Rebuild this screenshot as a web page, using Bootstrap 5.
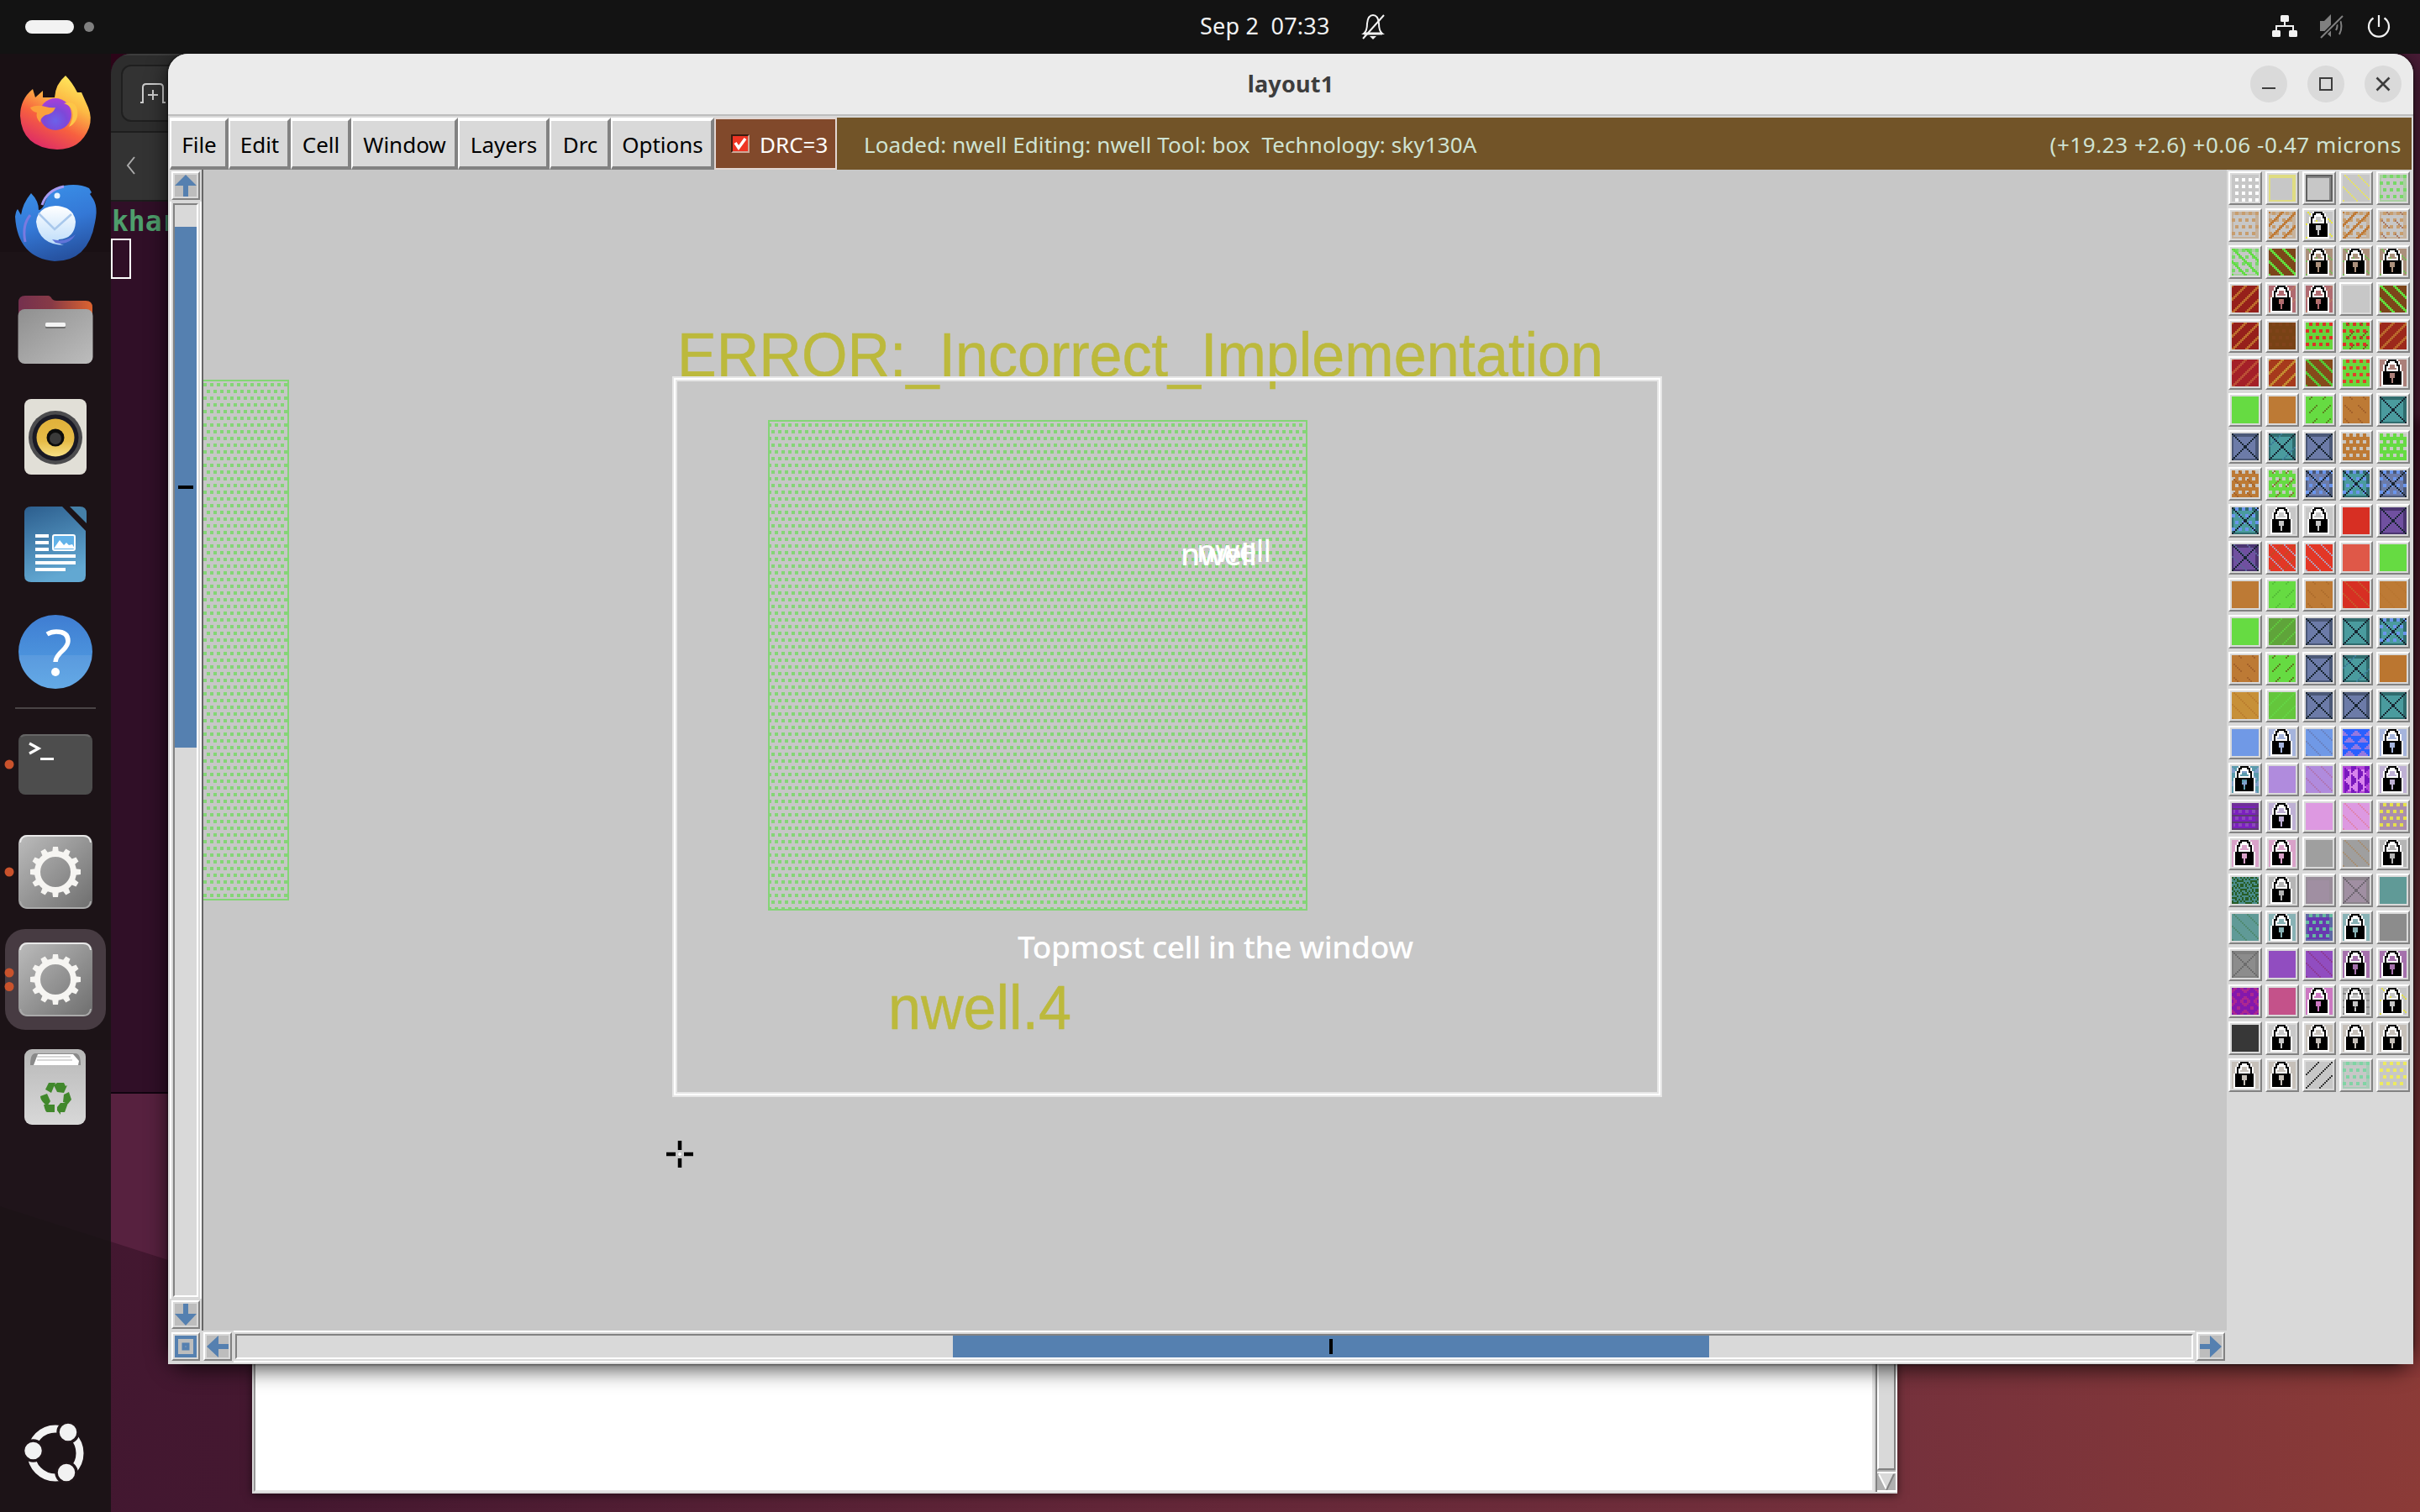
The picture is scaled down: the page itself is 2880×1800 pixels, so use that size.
<!DOCTYPE html>
<html lang="en">
<head>
<meta charset="utf-8">
<title>layout1</title>
<link rel="stylesheet" href="https://cdn.jsdelivr.net/npm/bootstrap@5.3.0/dist/css/bootstrap.min.css">
<style>
body{margin:0;overflow:hidden;background:#451830}
svg{display:block}
.desk{width:2880px;height:1800px;font-family:"Noto Sans","Open Sans",sans-serif;font-size:26px;line-height:1}
.wall{left:0;top:0}
.topbar{height:64px;background:#131313;color:#f2f2f2;z-index:5}
.pill{width:58px;height:16px;border-radius:8px;background:#f2f2f2;margin-left:30px}
.pilldot{width:12px;height:12px;border-radius:6px;background:#808080;margin-left:12px}
.clock{left:1428px;top:-1px;height:64px;gap:37px}
.clock span{font-size:27px;white-space:pre;letter-spacing:.2px;margin-top:-2px}
.tray{padding-right:33px;height:62px}
.tray svg+svg{margin-left:24px}
.dock{left:0;top:64px;width:132px;height:1736px;background:rgba(22,19,20,.86);padding-top:8px}
.dock svg{flex:none}
.dock-sep{width:96px;height:2px;margin:2px 18px;background:#4a4446}
.win{position:absolute;overflow:hidden}
.term{left:132px;top:64px;width:700px;height:1238px;background:#300f27;border-radius:24px 24px 0 0;border-bottom:2px solid #120410}
.term-head{height:94px;background:#2d2d2d;border-bottom:2px solid #1e1e1e;border-top:2px solid #3d3d3d;padding:11px 12px}
.term-new{width:120px;height:68px;border:2px solid #1f1f1f;border-radius:12px;background:#333;padding:20px 20px}
.term-tabs{height:82px;background:#333;border-bottom:2px solid #1c1c1c;padding:28px 18px}
.term-text{font:bold 33px/44px "DejaVu Sans Mono",monospace;color:#4e9e6c;padding:2px 0 0 1px}
.term-cur{width:24px;height:48px;border:2px solid #fff;margin-top:-2px}
.back{left:300px;top:1400px;width:1958px;height:378px;background:#fff;border-left:2px solid #d9d9d9;border-bottom:2px solid #d9d9d9;box-shadow:0 2px 10px rgba(0,0,0,.55)}
.back-text{border-left:2px solid #999;border-bottom:2px solid #e5e5e5;border-right:2px solid #e5e5e5}
.back-scroll{width:28px;background:#d9d9d9;padding-left:2px;border-right:2px solid #fff}
.back-track{border-left:2px solid #828282;background:#b0b0b0}
.back-thumb{border:2px solid #828282;border-left-color:#fff;background:#d9d9d9;margin-bottom:2px}
.main{left:200px;top:64px;width:2672px;height:1560px;background:#d9d9d9;border-radius:24px 24px 0 0}
.main-shadow{position:absolute;left:200px;top:64px;width:2672px;height:1560px;border-radius:24px;box-shadow:0 6px 26px rgba(0,0,0,.7),0 0 3px #000}
.title{height:74px;background:#ebebeb;border-bottom:2px solid #bdbdbd;color:#3d3d3d}
.title-text{font-weight:700;font-size:27px;padding-bottom:2px;letter-spacing:.2px}
.wbtns{right:14px;top:14px;gap:24px}
.menus{height:62px;margin:2px 2px 0}
.mbtn{background:#d9d9d9;border:solid;border-width:4px 4px 4px 2px;border-color:#fff #828282 #828282 #fff;color:#000;height:62px;flex:none;padding:2px 0 0 2px}
.drc{width:146px;border:2px solid #e2d6d2;background:#81492b;color:#fff;padding-left:18px;flex:none}
.drc span{padding-top:2px}
.drc-box{width:22px;height:22px;background:#ee3524;border:2px solid;border-color:#3a1c10 #cda898 #cda898 #3a1c10;margin-right:12px}
.status{background:#725428;color:#cfe3d3;padding:2px 12px 0 32px;white-space:pre}
.st-msg{letter-spacing:.11px}
.st-pos{letter-spacing:.56px}
.left{width:2448px;margin-left:2px;flex:none}
.vbar{width:38px;padding:2px 0;gap:2px}
.abtn{width:34px;height:34px;flex:none;border:2px solid;border-color:#fff #828282 #828282 #fff;padding:2px;background:#d9d9d9}
.abtn svg{background:#bdbdbd}
.vtrough{border:solid #fff;border-width:0 2px;padding:2px}
.vtrough>div{border:2px solid;border-color:#828282 #fff #fff #828282}
.vthumb{height:620px;margin-top:26px;background:#5580b0}
.hbar{height:40px;padding:0 2px 2px;gap:2px}
.htrough{border:solid #fff;border-width:2px 0;padding:2px}
.htrough>div{border:2px solid;border-color:#828282 #fff #fff #828282}
.hthumb{width:900px;margin-left:852px;background:#5580b0}
.view{background:#c7c7c7;border-left:2px solid #666}
.palette{display:grid;grid-template-columns:repeat(5,40px);grid-auto-rows:40px;gap:4px;padding:2px;align-content:start}
.sw{border:2px solid;border-color:#fff #828282 #828282 #fff;padding:2px}
</style>
<script src="https://cdn.jsdelivr.net/npm/bootstrap@5.3.0/dist/js/bootstrap.bundle.min.js"></script>
</head>
<body>
<div class="desk position-relative overflow-hidden">
<svg class="wall position-absolute" width="2880" height="1800">
<defs>
<linearGradient id="wg" x1="0" y1="1700" x2="2880" y2="1500" gradientUnits="userSpaceOnUse"><stop offset="0" stop-color="#411730"/><stop offset=".12" stop-color="#451830"/><stop offset=".45" stop-color="#622638"/><stop offset=".78" stop-color="#75313c"/><stop offset="1" stop-color="#8c3b37"/></linearGradient>
<linearGradient id="wr" x1="0" y1="0" x2="0" y2="1"><stop offset="0" stop-color="#4a1d38"/><stop offset=".3" stop-color="#47192f"/><stop offset=".31" stop-color="#380c20"/><stop offset=".6" stop-color="#50202a"/><stop offset="1" stop-color="#8a3837"/></linearGradient>
</defs>
<rect width="2880" height="1800" fill="url(#wg)"/>
<rect x="2800" width="80" height="1640" fill="url(#wr)"/>
<path d="M0 1250H200V1500L0 1436Z" fill="#57213f"/>
<rect width="300" height="300" fill="#2c0418"/>
</svg>

<div class="win term">
  <div class="term-head"><div class="term-new"><svg width="32" height="26" fill="none" stroke="#ccc" stroke-width="2"><path d="M1 23h3V5q0-4 4-4h16q4 0 4 4v18h3M16 8v12M10 14h12"/></svg></div></div>
  <div class="term-tabs"><svg width="12" height="22" fill="none" stroke="#aaa" stroke-width="2"><path d="M10 1L2 11l8 10"/></svg></div>
  <div class="term-text">khar</div><div class="term-cur"></div>
</div>

<div class="win back d-flex">
  <div class="back-text flex-grow-1"></div>
  <div class="back-scroll d-flex"><div class="back-track flex-grow-1 d-flex flex-column"><div class="back-thumb flex-grow-1"></div><svg width="22" height="24"><path d="M0 1h22" stroke="#fff" stroke-width="2"/><path d="M2 2h18l-9 19z" fill="#d9d9d9"/><path d="M2 3l9 18" stroke="#fff" stroke-width="2"/><path d="M20 3l-9 19" stroke="#828282" stroke-width="2"/><path d="M0 23h22" stroke="#fff" stroke-width="2"/></svg></div></div>
</div>

<div class="dock position-absolute d-flex flex-column">
<svg width="132" height="128" viewBox="0 0 132 128">
<defs>
<linearGradient id="ff" x1=".8" y1="0" x2=".3" y2="1"><stop offset="0" stop-color="#fff060"/><stop offset=".35" stop-color="#fcb944"/><stop offset=".65" stop-color="#f7603f"/><stop offset="1" stop-color="#dc2a68"/></linearGradient>
<radialGradient id="fp" cx=".5" cy=".7" r=".7"><stop offset="0" stop-color="#6b62ea"/><stop offset=".5" stop-color="#7d48d8"/><stop offset="1" stop-color="#a83fd8"/></radialGradient>
<linearGradient id="tb" x1=".3" y1="0" x2=".6" y2="1"><stop offset="0" stop-color="#3a90e8"/><stop offset=".5" stop-color="#3478d6"/><stop offset="1" stop-color="#254f9c"/></linearGradient>
<linearGradient id="en" x1="0" y1="0" x2="0" y2="1"><stop offset="0" stop-color="#fff"/><stop offset="1" stop-color="#bcdcfa"/></linearGradient>
<linearGradient id="fo"><stop offset="0" stop-color="#74304e"/><stop offset=".45" stop-color="#873a46"/><stop offset="1" stop-color="#dd6430"/></linearGradient>
<linearGradient id="fg" x1="0" y1="0" x2="1" y2="1"><stop offset="0" stop-color="#8f8f8f"/><stop offset="1" stop-color="#bdbdbd"/></linearGradient>
<linearGradient id="gg" x1="0" y1="0" x2="1" y2="1"><stop offset="0" stop-color="#bcbcbc"/><stop offset="1" stop-color="#6e6e6e"/></linearGradient>
<linearGradient id="wb" x1="0" y1="0" x2=".3" y2="1"><stop offset="0" stop-color="#2c5e8e"/><stop offset="1" stop-color="#62a8d2"/></linearGradient>
<linearGradient id="hb" x1="0" y1="0" x2="0" y2="1"><stop offset="0" stop-color="#3f7dd2"/><stop offset=".54" stop-color="#4b92dc"/><stop offset=".55" stop-color="#5a9ade"/><stop offset="1" stop-color="#64aae6"/></linearGradient>
<linearGradient id="yl" x1="0" y1="0" x2="0" y2="1"><stop offset="0" stop-color="#e0b13a"/><stop offset=".6" stop-color="#e6bc48"/><stop offset="1" stop-color="#f6e085"/></linearGradient>
<linearGradient id="tg" x1="0" y1="0" x2="0" y2="1"><stop offset="0" stop-color="#b8b8b8"/><stop offset="1" stop-color="#d8d8d8"/></linearGradient>
<g id="gear"><rect x="22" y="20" width="88" height="88" rx="10" fill="url(#gg)"/><path d="M24 29q1-8 9-8h66q8 0 9 8" stroke="#e8e8e8" stroke-width="2" fill="none"/><path d="M24 99q1 8 9 8h66q8 0 9-8" stroke="#aaa" stroke-width="2" fill="none"/><circle cx="66" cy="64" r="21.500" fill="none" stroke="#f6f5f2" stroke-width="7"/><g fill="#f6f5f2"><g id="t3"><path d="M62 42l1-8h6l1 8zM62 86l1 8h6l1-8z"/><path d="M62 42l1-8h6l1 8zM62 86l1 8h6l1-8z" transform="rotate(30 66 64)"/><path d="M62 42l1-8h6l1 8zM62 86l1 8h6l1-8z" transform="rotate(60 66 64)"/></g><use href="#t3" transform="rotate(90 66 64)"/></g></g>
</defs>
<path d="M24 66q0-20 15-32l3 10 9-8v8q8 0 14 0 1-16 13-26 8 8 14 20l5 0 8 18q5 12 1 24-10 26-38 26Q26 104 24 66z" fill="url(#ff)"/>
<circle cx="66" cy="64" r="19" fill="url(#fp)"/>
<path d="M36 56q8-4 18-1 7 2 12 1-3 8-12 9-6 3-6 9-6-6-4-12-6-1-8-6z" fill="#fba03c"/><path d="M76 51q18 6 6 28 12-6 10-20-2-12-16-8z" fill="#fdc648"/>
</svg>
<svg width="132" height="128" viewBox="0 0 132 128">
<path d="M18 58q1-7 3-9 3 5 4 7 2-14 12-26 9 9 9 20 3 0 6-5 6-20 24-24 18-3 30 3l3 5-2 2 4 6q6 10 2 28-8 46-48 46-44-4-47-53z" fill="url(#tb)"/>
<path d="M50 44q6-18 26-22" stroke="#a79af0" stroke-width="3" fill="none"/><path d="M30 88q-4-20 6-32" stroke="#7a7ae0" stroke-width="3" fill="none"/>
<path d="M43 64q2-18 23-19 22 1 24 19-1 20-20 21-3 4 6 7-30-1-33-28z" fill="url(#en)"/><path d="M46 54l19 19 20-18" stroke="#a9c8ec" stroke-width="2.500" fill="none"/><circle cx="68" cy="33" r="3.500" fill="#e8f4ff"/>
<path d="M62 85q16 4 28-6-8 14-24 10z" fill="#5f74d8"/>
</svg>
<svg width="132" height="128" viewBox="0 0 132 128"><path d="M22 50V32q0-8 8-8h27q3 0 5 4 2 2 5 2h35q8 0 8 8v20H22z" fill="url(#fo)"/><rect x="21.500" y="40" width="89" height="65" rx="8" fill="url(#fg)"/><rect x="54" y="58" width="24" height="5" rx="1.500" fill="#6f6f6f"/><rect x="54" y="56" width="24" height="5" rx="1.500" fill="#f4f4f4"/></svg>
<svg width="132" height="128" viewBox="0 0 132 128"><rect x="29" y="19" width="74" height="90" rx="8" fill="#e1dfd7"/><circle cx="66" cy="65" r="32" fill="#4c4c4e"/><circle cx="66" cy="65" r="27.500" fill="#1a1a24"/><circle cx="66" cy="65" r="22.500" fill="url(#yl)"/><circle cx="66" cy="65" r="10.500" fill="#0c0c0c"/><circle cx="66" cy="66" r="7" fill="#3a3a3a"/></svg>
<svg width="132" height="128" viewBox="0 0 132 128"><path d="M37 19h37l28 29v53q0 8-8 8H37q-8 0-8-8V27q0-8 8-8z" fill="url(#wb)"/><path d="M83 19h12q8 0 8 8v12z" fill="#4580a8"/><path d="M42 54h16M42 62h16M42 70h16M42 78h48M42 86h48M42 94h36" stroke="#fff" stroke-width="4"/><rect x="63" y="53" width="26" height="18" rx="2" fill="#62b2e8" stroke="#fff" stroke-width="2"/><path d="M64 69l7-10 5 6 3-3 3 3 4-1 3 5z" fill="#fff"/></svg>
<svg width="132" height="128" viewBox="0 0 132 128"><circle cx="66" cy="64" r="44" fill="url(#hb)"/><path d="M56 43q5-3 11-3 14 0 14 11 0 5-6 11-9 8-9 14" stroke="#fff" stroke-width="5.500" fill="none"/><circle cx="66" cy="88" r="5" fill="#fff"/></svg>
<div class="dock-sep flex-shrink-0"></div>
<svg width="132" height="128" viewBox="0 0 132 128"><circle cx="11" cy="64" r="5.500" fill="#c9522c"/><rect x="22" y="28" width="88" height="72" rx="8" fill="#4d4d4d"/><path d="M25 31q2-2 6-2h70q4 0 6 2" stroke="#666" stroke-width="2" fill="none"/><path d="M35 39l11 6-11 6" stroke="#fff" stroke-width="3.200" fill="none"/><path d="M48 57.500h16" stroke="#fff" stroke-width="3"/></svg>
<svg width="132" height="128" viewBox="0 0 132 128"><circle cx="11" cy="64" r="5.500" fill="#c9522c"/><use href="#gear"/></svg>
<svg width="132" height="128" viewBox="0 0 132 128"><rect x="6" y="4" width="120" height="120" rx="24" fill="#473b42"/><circle cx="11" cy="56" r="5.500" fill="#c9522c"/><circle cx="11" cy="72.500" r="5.500" fill="#c9522c"/><use href="#gear"/></svg>
<svg width="132" height="128" viewBox="0 0 132 128"><rect x="29" y="19" width="73" height="90" rx="9" fill="url(#tg)"/><path d="M36 38q0-14 6-14h48q6 0 6 14z" fill="#8a8a8a"/><path d="M40 38l5-13h42l7 8-1 5z" fill="#fff"/><path d="M44 32h42M44 28h40" stroke="#ccc" stroke-width="1.500"/><g fill="#41882c"><path d="M54 67l4-8h8l-5 12zM68 59h8l2 4 2-1-4 9-8-1-4-8zM48 75l8-3 4 9-4 6-4-4q-4-4-4-8zM52 85h13v9H56q-2 0-4-9zM76 73l6-3 3 9-4 5-6-2zM68 88l4-5h9l-4 11h-5v3l-4-5z"/></g></svg>
<svg class="mt-auto" width="132" height="142" viewBox="0 0 132 142"><circle cx="66" cy="72" r="29" fill="none" stroke="#f2f2f2" stroke-width="9"/><g fill="#f2f2f2" stroke="#1f1519" stroke-width="3.500"><circle cx="39.500" cy="69" r="12"/><circle cx="81" cy="47" r="12"/><circle cx="79" cy="95" r="12"/></g></svg>
</div>

<div class="main-shadow"></div>
<div class="win main d-flex flex-column">
  <div class="title position-relative d-flex align-items-center justify-content-center flex-shrink-0">
    <span class="title-text">layout1</span>
    <div class="wbtns position-absolute d-flex">
      <svg width="44" height="44"><circle cx="22" cy="22" r="22" fill="#dadada"/><path d="M14 27h16" stroke="#3d3d3d" stroke-width="2"/></svg>
      <svg width="44" height="44"><circle cx="22" cy="22" r="22" fill="#dadada"/><path d="M15 15h14v14H15z" stroke="#3d3d3d" stroke-width="2" fill="none"/></svg>
      <svg width="44" height="44"><circle cx="22" cy="22" r="22" fill="#dadada"/><path d="M14.500 14.500l15 15M29.500 14.500l-15 15" stroke="#3d3d3d" stroke-width="2.600"/></svg>
    </div>
  </div>
  <div class="menus d-flex flex-shrink-0" id="menus">
    <div class="mbtn d-flex align-items-center justify-content-center" style="width:70px">File</div>
    <div class="mbtn d-flex align-items-center justify-content-center" style="width:74px">Edit</div>
    <div class="mbtn d-flex align-items-center justify-content-center" style="width:72px">Cell</div>
    <div class="mbtn d-flex align-items-center justify-content-center" style="width:127px">Window</div>
    <div class="mbtn d-flex align-items-center justify-content-center" style="width:109px">Layers</div>
    <div class="mbtn d-flex align-items-center justify-content-center" style="width:73px">Drc</div>
    <div class="mbtn d-flex align-items-center justify-content-center" style="width:123px">Options</div>
    <div class="drc d-flex align-items-center"><div class="drc-box"><svg width="18" height="18"><path d="M3 8l4 6 8-11" stroke="#fff" stroke-width="3.500" fill="none"/></svg></div><span>DRC=3</span></div>
    <div class="status d-flex align-items-center justify-content-between flex-grow-1"><span class="st-msg">Loaded: nwell Editing: nwell Tool: box  Technology: sky130A</span><span class="st-pos">(+19.23 +2.6) +0.06 -0.47 microns</span></div>
  </div>
  <div class="d-flex flex-grow-1">
    <div class="left d-flex flex-column">
      <div class="d-flex flex-grow-1">
        <div class="vbar d-flex flex-column align-items-center">
          <div class="abtn"><svg width="26" height="26"><path d="M13 0l13 13h-10v13h-6V13H0z" fill="#5580b0"/></svg></div>
          <div class="vtrough d-flex flex-grow-1 w-100"><div class="w-100"><div class="vthumb"><svg width="26" height="620"><path d="M4 310h18" stroke="#000" stroke-width="4"/></svg></div></div></div>
          <div class="abtn"><svg width="26" height="26"><path d="M13 26L0 12h10V0h6v12h10z" fill="#5580b0"/></svg></div>
        </div>
        <div class="view flex-grow-1">
          <svg width="2408" height="1382" viewBox="242 202 2408 1382">
            <defs><pattern id="st" x="914" y="504" width="8" height="16" patternUnits="userSpaceOnUse"><path d="M0 0h4v4H0zM4 8h4v4H4z" fill="#84d576"/></pattern></defs>
            <rect x="242" y="452" width="102" height="620" fill="url(#st)"/><path d="M242 453h101v618h-101" fill="none" stroke="#84d576" stroke-width="2"/>
            <rect x="914" y="500" width="642" height="584" fill="url(#st)"/><rect x="915" y="501" width="640" height="582" fill="none" stroke="#84d576" stroke-width="2"/>
            <g font-family="Liberation Sans, Arial, sans-serif" font-size="73.500" fill="#bcb93c" stroke="#bcb93c" stroke-width=".5"><text x="806" y="448" textLength="1102" lengthAdjust="spacingAndGlyphs">ERROR:_Incorrect_Implementation</text><text x="1057" y="1225" textLength="218" lengthAdjust="spacingAndGlyphs">nwell.4</text></g>
            <rect x="803" y="451" width="1172" height="852" fill="none" stroke="#e6e6e6" stroke-width="6"/><rect x="803" y="451" width="1172" height="852" fill="none" stroke="#fff" stroke-width="2"/>
            <g font-family="Noto Sans, sans-serif" font-weight="500" fill="#fff" font-size="37"><text x="1211" y="1141" textLength="471">Topmost cell in the window</text><text x="1405" y="673" textLength="91">nwell</text><text x="1424" y="669" font-weight="400" textLength="89">nwell</text></g>
            <path d="M809 1358v11M809 1379v11M793 1374h11M814 1374h11" stroke="#000" stroke-width="4.500"/><path d="M809 1372v4M807 1374h4" stroke="#fff" stroke-width="1.500"/>
          </svg>
        </div>
      </div>
      <div class="hbar d-flex flex-shrink-0">
        <div class="abtn mt-auto mb-auto"><svg width="26" height="26" fill="none" stroke="#5580b0"><path d="M2 2h22v22H2z" stroke-width="4"/><path d="M10.500 10.500h5v5h-5z" stroke-width="4"/></svg></div>
        <div class="abtn mt-auto mb-auto" style="margin-left:2px"><svg width="26" height="26"><path d="M0 13L14 0v10h12v6H14v10z" fill="#5580b0"/></svg></div>
        <div class="htrough d-flex flex-grow-1"><div class="d-flex w-100"><div class="hthumb"><svg width="900" height="26"><path d="M450 4v18" stroke="#000" stroke-width="4"/></svg></div></div></div>
        <div class="abtn mt-auto mb-auto"><svg width="26" height="26"><path d="M26 13L12 0v10H0v6h12v10z" fill="#5580b0"/></svg></div>
      </div>
    </div>
    <div class="palette" id="palette"></div>
  </div>
</div>

<div class="topbar position-absolute top-0 start-0 w-100 d-flex align-items-center">
  <div class="pill"></div><div class="pilldot"></div>
  <div class="clock position-absolute d-flex align-items-center"><span>Sep 2  07:33</span><svg width="28" height="32" fill="none" stroke="#f2f2f2" stroke-width="2"><path d="M3 25q4-3 4-12 1-10 7-10t7 10q0 9 4 12z"/><path d="M3 25h22" stroke-width="3"/><path d="M10 28h8l-4 4z" fill="#f2f2f2" stroke="none"/><path d="M2 31L27 3"/></svg></div>
  <div class="tray ms-auto mb-auto d-flex align-items-center">
    <svg width="32" height="28" fill="#f2f2f2"><rect x="11" y="1" width="10" height="8" rx="1.500"/><rect x="1" y="19" width="10" height="8" rx="1.500"/><rect x="21" y="19" width="10" height="8" rx="1.500"/><path d="M16 8v6M6 20v-6h20v6" fill="none" stroke="#f2f2f2" stroke-width="2"/></svg>
    <svg width="32" height="30" fill="none" stroke="#808080" stroke-width="2"><path d="M2 9h5l8-8v27l-8-7H2z" fill="#808080" stroke="none"/><path d="M21 10q3 5 0 10M25 6q5 9 0 19"/><path d="M3 29L29 3" stroke="#131313" stroke-width="5"/><path d="M3 29L29 3"/></svg>
    <svg width="32" height="30" fill="none" stroke="#f2f2f2" stroke-width="2.200"><path d="M9.500 5.500a12 12 0 1 0 13 0M16 2v14"/></svg>
  </div>
</div>
</div>
<script>
// Layer fill styles on a 16x16 grid: each test tells whether a cell of the grid takes the colour.
const inShort = y => [5,6,7,0,1].includes(y % 8);
const m = (a, n) => ((a % n) + n) % n;
const P = {
  grid:(x,y)=>x%4>1&&y%4>1,
  dots:(x,y)=>y%4<2&&(y%8<4?x%4>1:x%4<2),
  back:(x,y)=>m(x-y,8)==1,
  fwd:(x,y)=>m(x+y,8)==7,
  Back:(x,y)=>m(x-y,8)<2,
  Fwd:(x,y)=>m(x+y,8)==7||m(x+y,8)==0,
  sf:(x,y)=>m(x+y,8)==3&&inShort(y),
  sb:(x,y)=>m(x-y,8)==4&&inShort(y),
  edge:(x,y)=>y<2||x<1||x>13||y>14,
  rim:(x,y)=>y<1||x<1||x>14||y>14,
  cross:(x,y)=>x==y||x+y==15,
  tri:(x,y)=>Math.abs(m(x+(m(y,8)>3?4:0),8)-3.5)<4-m(y,4),
  rtri:(x,y)=>{const k=Math.floor((x-1)/4),l=m(x-1,4),d=Math.abs(m(y+(k%2?4:0),8)-4);return l<3&&d<4-l*1.3},
  bars:(x,y)=>m(y,4)==3,
  weave:(x,y)=>m(x*3+y*5,7)<2||m(x*5-y*3,9)<2,
  rings:(x,y)=>{const a=Math.abs(m(x+4,8)-3.5)+Math.abs(m(y+4,8)-3.5),b=Math.abs(m(x,8)-3.5)+Math.abs(m(y,8)-3.5);return b<2||(a>=2&&a<4&&b>2)}
};
const LOCK = ["....WKKKKKW","...WKKWWWKKW","...WKWWWWWKW","..WKKW...WKKW","..WKWW...WWKW","..WKW.....WKW","..WKWWWWWWWKW",".WKKKKKKKKKKKW",".WKKKK...KKKKW",".WKKKK...KKKKW",".WKKKK...KKKKW",".WKKKKK.KKKKKW",".WKKKKK.KKKKKW",".WKKKKK.KKKKKW",".WKKKKKKKKKKKW",".WWWWWWWWWWWWW"];
P.lw = (x,y)=>LOCK[y][x]=="W"; P.lk = (x,y)=>LOCK[y][x]=="K";
const L = " lw:#fff lk:#000";
const T = "#4a9b9e edge:#306c6e", S = "#6c7ba8 edge:#4b5877", X = " cross:#172430", V = "#7050a0 edge:#4b3570";
const BD = " dots:#6a95ec", G = "#c7c7c7", GR = "#66db42", OR = "#bd7a35", BR = "#7c451a";
const cells = [
 G+" grid:#fff", G+" edge:#dfdc82", G+" edge:#858585 rim:#606060", G+" back:#e4e06c", G+" edge:#a9cfa0 dots:#78d868",
 G+" edge:#c6b29c dots:#c79d6e", G+" edge:#c6b29c dots:#c79d6e Fwd:#bf7a36", G+" back:#e8e83c"+L, G+" edge:#c6b29c dots:#c79d6e Fwd:#bf7a36", G+" edge:#c6b29c dots:#c79d6e sb:#a97a62",
 G+" edge:#a9cfa0 dots:#78d868 Back:#62dd44", BR+" Back:#62dd3c", "#ab907c back:#78b858"+L, "#ab907c back:#78b858"+L, "#ab907c back:#78b858"+L,
 "#96201b Fwd:#bd6c2c", "#b06a70 fwd:#bb7c66"+L, "#b06a70 fwd:#bb7c66"+L, G, BR+" Back:#62dd3c",
 "#96201b Fwd:#bd6c2c", "#784215 dots:#80431a", "#66d43c dots:#dc3226", "#66d43c dots:#dc3226 sf:#7c5c1c", "#9c281b Fwd:#b9682c",
 "#a42028 Fwd:#bb4f35", "#a6391c Fwd:#c38a30", "#854a1b Back:#55c634", "#6ad83e dots:#e04029", "#ab807a"+L,
 GR, OR, GR+" sf:#5c8222", OR+" sb:#a4622a", T+X,
 S+X, T+" fwd:#3c7c98"+X, S+X, OR+" dots:#c9c5bf", GR+" dots:#c6ccc2",
 OR+" dots:#c9c5bf sb:#a4622a", GR+" dots:#c2cabc sf:#857434", S+BD+X, T+BD+X, S+BD+X,
 T+BD+X, G+L, G+L, "#d72f23", V+X,
 V+" back:#5d629a"+X, "#e33726 fwd:#c04a24 back:#b39bb4", "#e33726 back:#b39bb4", "#df5848", GR,
 OR, GR+" sf:#56bf38", OR+" sb:#b06e2d", "#d72f23 back:#c8562a", OR+" back:#b97631",
 GR, "#5fa43a fwd:#60c83e", S+X, T+X, T+BD+X,
 OR+" sb:#a4622a", GR+" sf:#61751f", S+X, T+" fwd:#3c7c98"+X, "#bb7630",
 "#c79038 back:#bc8030", "#64c63c fwd:#64d444", S+X, S+X, T+X,
 "#7099e6", "#a5b4dc"+L, "#7099e6 back:#6a84c4", "#9478e0 tri:#2a60ff", "#a5b4dc"+L,
 "#80a0cc tri:#5a9aac"+L, "#b08bdd", "#b08bdd back:#af78b8", "#d884ec edge:#b044d8 rtri:#7a18be", "#beb0d4"+L,
 "#7c20c0 dots:#8c48bc edge:#703098 bars:#5c3c70", "#beb0d4"+L, "#dd99e1", "#dd99e1 back:#df86b2", "#aa8eac dots:#e5df4c",
 "#d9a2c9"+L, "#d9a2c9"+L, "#9f9f9f", "#9f9f9f back:#a58f76", "#b5b5b5"+L,
 "#4a8c8a weave:#265c26", "#b5b5b5"+L, "#a08fa2 edge:#998d9a", "#a08fa2 edge:#8c848c cross:#706872", "#609a97",
 "#609a97 back:#508a72", "#88b2b5"+L, "#6838b0 edge:#5f68a4 dots:#66baa0", "#88b2b5"+L, "#8c8c8c",
 "#8c8c8c edge:#808080 cross:#6c6c6c", "#914dc0", "#914dc0 back:#8c3c98", "#a571ac"+L, "#a571ac"+L,
 "#8418ac rings:#ab2890", "#c4528a", "#cc78c2"+L, "#c7c7c7 edge:#aaa bars:#888"+L, "#c7c7c7 back:#e0de4c"+L,
 "#373737", "#c8c8c8"+L, "#c6c0b9"+L, "#c6c0b9"+L, "#c6c0b9"+L,
 "#c6c0b9"+L, "#c6c0b9"+L, G+" fwd:#333", G+" edge:#a8cdb8 dots:#80d4a4", G+" dots:#ecea60"
];
document.getElementById("palette").innerHTML = cells.map(c => {
  const [base, ...layers] = c.split(" ");
  let s = `<rect width="16" height="16" fill="${base}"/>`;
  for (const l of layers) {
    const [p, col] = l.split(":");
    let d = "";
    for (let y = 0; y < 16; y++) for (let x = 0; x < 16; x++) if (P[p](x, y)) d += `M${x} ${y}h1v1h-1z`;
    s += `<path d="${d}" fill="${col}"/>`;
  }
  return `<div class="sw"><svg width="32" height="32" viewBox="0 0 16 16" shape-rendering="crispEdges">${s}</svg></div>`;
}).join("");
</script>
</body>
</html>
